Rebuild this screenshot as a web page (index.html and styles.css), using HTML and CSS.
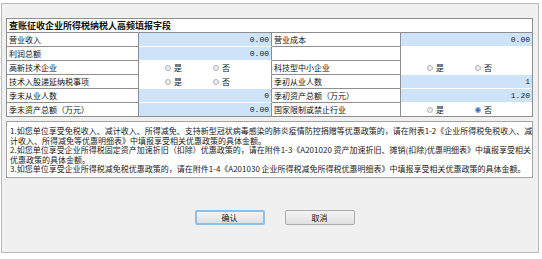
FILE: index.html
```html
<!DOCTYPE html>
<html lang="zh-CN">

<head>
    <meta charset="UTF-8">
    <meta name="viewport" content="width=device-width, initial-scale=1.0">
    <link rel="stylesheet" href="styles.css">
    <title>高频填报字段</title>
</head>

<body>

    <div class="dialog">
        <div class="grid">
            <div class="title">查账征收企业所得税纳税人高频填报字段</div>

            <div class="label">营业收入</div>
            <div class="value"><div class="input">0.00</div></div>
            <div class="label">营业成本</div>
            <div class="value last"><div class="input">0.00</div></div>

            <div class="label">利润总额</div>
            <div class="value"><div class="input">0.00</div></div>
            <div class="label"></div>
            <div class="value last"></div>

            <div class="label">高新技术企业</div>
            <div class="value">
                <span class="opt"><span class="radio"></span>是</span>
                <span class="opt"><span class="radio"></span>否</span>
            </div>
            <div class="label">科技型中小企业</div>
            <div class="value last">
                <span class="opt"><span class="radio"></span>是</span>
                <span class="opt"><span class="radio"></span>否</span>
            </div>

            <div class="label">技术入股递延纳税事项</div>
            <div class="value">
                <span class="opt"><span class="radio"></span>是</span>
                <span class="opt"><span class="radio"></span>否</span>
            </div>
            <div class="label">季初从业人数</div>
            <div class="value last"><div class="input">1</div></div>

            <div class="label">季末从业人数</div>
            <div class="value"><div class="input">0</div></div>
            <div class="label">季初资产总额（万元）</div>
            <div class="value last"><div class="input">1.20</div></div>

            <div class="label bottom">季末资产总额（万元）</div>
            <div class="value bottom"><div class="input">0.00</div></div>
            <div class="label bottom">国家限制或禁止行业</div>
            <div class="value last bottom">
                <span class="opt"><span class="radio"></span>是</span>
                <span class="opt"><span class="radio checked"></span>否</span>
            </div>
        </div>

        <div class="notes">
            <p>1.如您单位享受免税收入、减计收入、所得减免、支持新型冠状病毒感染的肺炎疫情防控捐赠等优惠政策的，请在附表1-2《企业所得税免税收入、减<br>计收入、所得减免等优惠明细表》中填报享受相关优惠政策的具体金额。</p>
            <p>2.如您单位享受企业所得税固定资产加速折旧（扣除）优惠政策的，请在附件1-3《A201020 资产加速折旧、摊销(扣除)优惠明细表》中填报享受相关<br>优惠政策的具体金额。</p>
            <p>3.如您单位享受企业所得税减免税优惠政策的，请在附件1-4《A201030 企业所得税减免所得税优惠明细表》中填报享受相关优惠政策的具体金额。</p>
        </div>

        <div class="buttons">
            <button class="btn btnOk">确认</button>
            <button class="btn">取消</button>
        </div>
    </div>

</body>

</html>
```

FILE: styles.css
```css
* {
    margin: 0;
    padding: 0;
    box-sizing: border-box;
}

body {
    background-color: #fff;
    font-family: "Noto Sans CJK SC", "Noto Sans", sans-serif;
    font-size: 8px;
    color: #111;
}

.dialog {
    width: 538px;
    height: 250px;
    margin: 3px 0 0 1px;
    padding: 14px 5px 0 4px;
    background-color: #f0f0f0;
    border: 1px solid #b9b9b9;
}

.grid {
    display: grid;
    grid-template-columns: 132px 133px 129px 131px;
    width: 527px;
    border: 1px solid #8e8e8e;
    background-color: #fff;
}

.grid .title {
    grid-column: 1 / 5;
    height: 14px;
    line-height: 13px;
    padding-left: 2px;
    font-size: 9px;
    font-weight: bold;
    border-bottom: 1px solid #8e8e8e;
}

.grid .label {
    height: 14px;
    line-height: 13px;
    padding-left: 2px;
    border-right: 1px solid #8e8e8e;
    border-bottom: 1px solid #8e8e8e;
    white-space: nowrap;
}

.grid .value {
    height: 14px;
    display: flex;
    align-items: center;
    padding-left: 26px;
    border-right: 1px solid #8e8e8e;
    border-bottom: 1px solid #fff;
}

.grid .value.last {
    border-right: none;
}

.grid .bottom {
    border-bottom: none;
    height: 13px;
}

.grid .value .input {
    align-self: stretch;
    margin-left: -26px;
    flex: 1;
    background-color: #cce3f9;
    text-align: right;
    padding-right: 2px;
    line-height: 13px;
    font-family: "Liberation Mono", monospace;
    font-size: 8px;
    color: #222;
}

.opt {
    display: inline-flex;
    align-items: center;
    width: 48px;
    line-height: 13px;
}

.radio {
    display: inline-block;
    width: 6px;
    height: 6px;
    margin-right: 3px;
    border: 1px solid #b5b5b5;
    border-radius: 50%;
    background-color: #ececec;
}

.radio.checked {
    border-color: #7a9cc8;
    background: radial-gradient(circle, #2f6fc4 0, #2f6fc4 1.5px, #e4ecf6 2px);
}

.notes {
    width: 527px;
    height: 57px;
    margin-top: 4px;
    padding: 4px 0 0 3px;
    background-color: #fff;
    border: 1px solid #a3a3a3;
    font-size: 8px;
    line-height: 9.6px;
    white-space: nowrap;
    color: #222;
}

.buttons {
    display: flex;
    justify-content: center;
    gap: 20px;
    margin-top: 32px;
    padding-left: 10px;
}

.btn {
    width: 70px;
    height: 15px;
    font-family: "Noto Sans CJK SC", sans-serif;
    font-size: 8px;
    color: #111;
    border: 1px solid #acacac;
    border-radius: 2px;
    background: linear-gradient(#f4f4f4, #e0e0e0);
}

.btnOk {
    border: 2px solid #8cc0ec;
}
```
